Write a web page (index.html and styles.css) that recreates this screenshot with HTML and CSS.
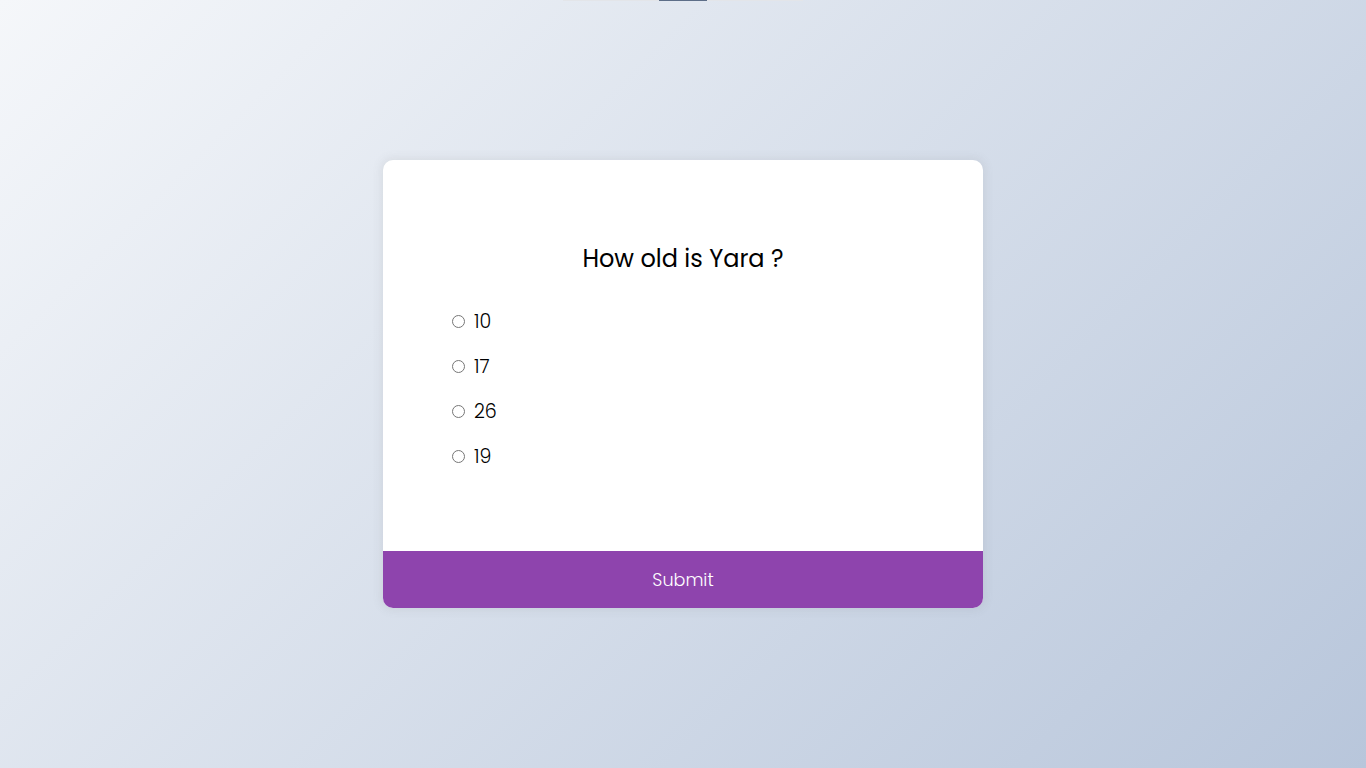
FILE: index.html
```html
<!DOCTYPE html>
<html lang="en">
<head>
<meta charset="UTF-8">
<title>Quiz App</title>
<link rel="stylesheet" href="styles.css">
</head>
<body>
  <div class="top-bar"><span class="top-bar-fill"></span></div>
  <main class="stage">
    <div class="quiz-container">
      <div class="quiz-header">
        <h2 class="question">How old is Yara ?</h2>
        <ul class="answers">
          <li><input type="radio" name="answer" id="a" class="answer"><label for="a">10</label></li>
          <li><input type="radio" name="answer" id="b" class="answer"><label for="b">17</label></li>
          <li><input type="radio" name="answer" id="c" class="answer"><label for="c">26</label></li>
          <li><input type="radio" name="answer" id="d" class="answer"><label for="d">19</label></li>
        </ul>
      </div>
      <button class="submit">Submit</button>
    </div>
  </main>
</body>
</html>
```
FILE: styles.css
```css
* { box-sizing: border-box; }

html, body {
  margin: 0;
  height: 100%;
}

body {
  background-color: #b8c6db;
  background-image: linear-gradient(315deg, #b8c6db 0%, #f5f7fa 100%);
  font-family: "Poppins", "Open Sans", sans-serif;
  display: flex;
  flex-direction: column;
  overflow: hidden;
}

.top-bar {
  width: 240px;
  height: 1px;
  margin: 0 0 -1px 563px;
  background: #e3e5e9;
  display: flex;
  flex-shrink: 0;
}

.top-bar-fill {
  display: block;
  width: 48px;
  margin-left: 96px;
  background: #5d6e88;
}

.stage {
  flex: 1;
  display: flex;
  align-items: center;
  justify-content: center;
}

.quiz-container {
  background-color: #fff;
  border-radius: 10px;
  box-shadow: 0 0 10px 2px rgba(100, 100, 100, 0.1);
  width: 600px;
  overflow: hidden;
}

.quiz-header {
  padding: 64px;
}

.question {
  padding: 17px 16px 15px;
  margin: 0;
  text-align: center;
  font-size: 24px;
  line-height: 36px;
  font-weight: 400;
  color: #000;
}

.answers {
  list-style: none;
  padding: 0;
  margin: 15px 0 16px;
}

.answers li {
  font-family: "Poppins Light", "Poppins", sans-serif;
  font-size: 19px;
  line-height: 29px;
  margin: 16px 0;
  font-weight: 300;
  color: #000;
  display: flex;
  align-items: center;
}

.answers li:first-child { margin-top: 0; }
.answers li:last-child { margin-bottom: 0; }

.answer {
  margin: 0 0 0 5px;
  width: 13px;
  height: 13px;
}

.answers label {
  margin-left: 9px;
  cursor: pointer;
}

.submit {
  background-color: #8e44ad;
  color: #fff;
  border: none;
  display: block;
  width: 100%;
  height: 57px;
  cursor: pointer;
  font-size: 17.6px;
  font-family: "Poppins Light", "Poppins", sans-serif;
  font-weight: 300;
  padding: 0;
}
```
